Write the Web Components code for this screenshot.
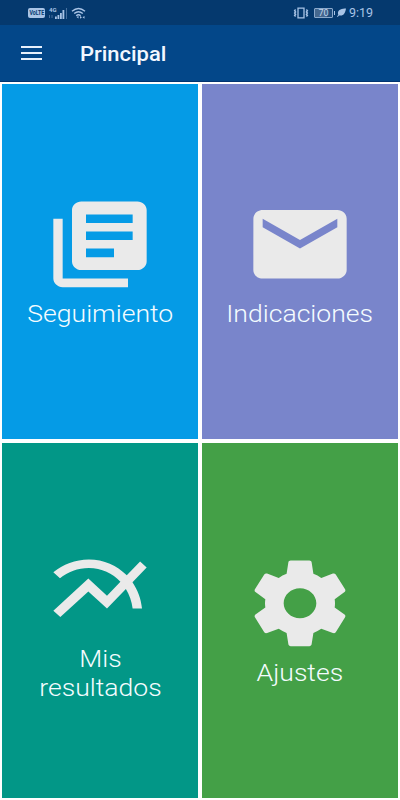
<!DOCTYPE html>
<html lang="es">
<head>
    <meta charset="UTF-8">
    <meta name="viewport" content="width=device-width, initial-scale=1.0">
    <title>Principal</title>
    <style>
        body {
            margin: 0;
            background: #fff;
            font-family: Roboto, "Liberation Sans", sans-serif;
        }
    </style>
</head>
<body>
    <app-screen>
        <status-bar slot="top"></status-bar>
        <app-header slot="top">Principal</app-header>
        <menu-tile icon="library" color="#059be6">Seguimiento</menu-tile>
        <menu-tile icon="mail" color="#7985cb">Indicaciones</menu-tile>
        <menu-tile icon="chart" color="#029787">Mis<br>resultados</menu-tile>
        <menu-tile icon="settings" color="#44a047">Ajustes</menu-tile>
    </app-screen>

    <script>
        const ICONS = {
            library: 'M4 6H2v14c0 1.1.9 2 2 2h14v-2H4V6zm16-4H8c-1.1 0-2 .9-2 2v12c0 1.1.9 2 2 2h12c1.1 0 2-.9 2-2V4c0-1.1-.9-2-2-2zm-1 9H9V9h10v2zm-4 4H9v-2h6v2zm4-8H9V5h10v2z',
            mail: 'M20 4H4c-1.1 0-1.99.9-1.99 2L2 18c0 1.1.9 2 2 2h16c1.1 0 2-.9 2-2V6c0-1.1-.9-2-2-2zm0 4l-8 5-8-5V6l8 5 8-5v2z',
            chart: 'M22 6.92l-1.41-1.41-2.85 3.21C15.68 6.4 12.83 5 9.61 5 6.72 5 4.07 6.16 2 8l1.42 1.42C5.12 7.93 7.27 7 9.61 7c2.74 0 5.09 1.26 6.77 3.24l-2.88 3.24-4-4L2 16.99l1.5 1.5 6-6.01 4 4 4.05-4.55c.75 1.35 1.25 2.9 1.44 4.55H21c-.22-2.3-.95-4.39-2.04-6.14L22 6.92z',
            settings: 'M19.43 12.98c.04-.32.07-.64.07-.98s-.03-.66-.07-.98l2.11-1.65c.19-.15.24-.42.12-.64l-2-3.46c-.12-.22-.39-.3-.61-.22l-2.49 1c-.52-.4-1.08-.73-1.69-.98l-.38-2.65C14.46 2.18 14.25 2 14 2h-4c-.25 0-.46.18-.49.42l-.38 2.65c-.61.25-1.17.59-1.69.98l-2.49-1c-.23-.09-.49 0-.61.22l-2 3.46c-.13.22-.07.49.12.64l2.11 1.65c-.04.32-.07.65-.07.98s.03.66.07.98l-2.11 1.65c-.19.15-.24.42-.12.64l2 3.46c.12.22.39.3.61.22l2.49-1c.52.4 1.08.73 1.69.98l.38 2.65c.03.24.24.42.49.42h4c.25 0 .46-.18.49-.42l.38-2.65c.61-.25 1.17-.59 1.69-.98l2.49 1c.23.09.49 0 .61-.22l2-3.46c.12-.22.07-.49-.12-.64l-2.11-1.65zM12 15.5c-1.93 0-3.5-1.57-3.5-3.5s1.57-3.5 3.5-3.5 3.5 1.57 3.5 3.5-1.57 3.5-3.5 3.5z'
        };

        class AppScreen extends HTMLElement {
            constructor() {
                super();
                this.attachShadow({ mode: 'open' });
                this.shadowRoot.innerHTML = `
                    <style>
                        :host {
                            display: flex;
                            flex-direction: column;
                            height: 800px;
                            overflow: hidden;
                        }
                        main {
                            flex: 1;
                            display: grid;
                            grid-template-columns: 1fr 1fr;
                            grid-template-rows: 355px 355px;
                            gap: 4px;
                            padding: 2px;
                        }
                    </style>
                    <slot name="top"></slot>
                    <main><slot></slot></main>
                `;
            }
        }

        class StatusBar extends HTMLElement {
            constructor() {
                super();
                this.attachShadow({ mode: 'open' });
                this.shadowRoot.innerHTML = `
                    <style>
                        :host {
                            display: flex;
                            align-items: center;
                            height: 25px;
                            padding: 0 25px 0 28px;
                            box-sizing: border-box;
                            background: #05396e;
                            color: #a9c4e6;
                        }
                        svg { display: block; fill: currentColor; }
                        .volte {
                            display: flex;
                            justify-content: center;
                            width: 17px;
                            height: 10px;
                            border-radius: 2px;
                            background: #a9c4e6;
                            color: #05396e;
                            font: 700 7px/10px Roboto, sans-serif;
                        }
                        .volte span { transform: scaleX(0.75); }
                        .signal {
                            display: grid;
                            width: 18px;
                            height: 12px;
                            margin-left: 4px;
                        }
                        .signal > * { grid-area: 1 / 1; }
                        .signal span { font: 700 6px/6px Roboto, sans-serif; }
                        .wifi { margin-left: 4px; }
                        .vibrate { margin-left: auto; }
                        .battery {
                            width: 17px;
                            height: 8px;
                            margin-left: 5px;
                            border: 1px solid #8ba9cc;
                            border-radius: 1px;
                            background: linear-gradient(90deg, #45688f 70%, #1f4d7e 70%);
                            color: #c2d6ee;
                            font: 9px/9px Roboto, sans-serif;
                            text-align: center;
                        }
                        .tip { width: 1px; height: 4px; margin-left: 1px; background: currentColor; }
                        .leaf { margin-left: 2px; }
                        .time { margin-left: 3px; width: 26px; font-size: 12px; line-height: 14px; white-space: nowrap; }
                        .time span { display: inline-block; transform: scaleX(1.04); transform-origin: left; }
                    </style>
                    <div class="volte"><span>VoLTE</span></div>
                    <div class="signal">
                        <span>4G</span>
                        <svg width="18" height="12" viewBox="0 0 18 12">
                            <path d="M6 9.500h1.800V12H6zM8.500 8h1.800v4H8.500zM11 6h1.800v6H11zM13.500 3h1.800v9h-1.800z"/>
                            <path opacity=".4" d="M0 8h1v3H0zM2.500 8h1v3h-1zM17 1h1v11h-1z"/>
                        </svg>
                    </div>
                    <svg class="wifi" width="15" height="12" viewBox="0 0 15 12">
                        <path d="M1 4.200Q7.500-1.400 14 4.200M3.200 6.600Q7.500 2.800 11.800 6.600M5.200 8.700Q7.500 6.900 9.600 8.700" fill="none" stroke="currentColor" stroke-width="1.400"/>
                        <path d="M5.500 10l2-1v2.500zM9 9l2 1.300-2 1.400zM13.500 9l-2 1.300 2 1.400z"/>
                    </svg>
                    <svg class="vibrate" width="16" height="12" viewBox="0 0 16 12">
                        <path d="M5 1.200h6v9.600H5z" fill="none" stroke="currentColor" stroke-width="1.300"/>
                        <path d="M2.600 2.500l-1 1.200 1 1.200-1 1.200 1 1.200-1 1.200 1 1M13.400 2.500l1 1.200-1 1.200 1 1.200-1 1.200 1 1.200-1 1" fill="none" stroke="currentColor" stroke-width="1.400"/>
                    </svg>
                    <div class="battery">70</div>
                    <div class="tip"></div>
                    <svg class="leaf" width="9" height="9" viewBox="0 0 9 9">
                        <path d="M9 .5C5 .5 1.200 1.600.9 5c0 .8.200 1.400.400 1.800L0 8.500l.7.4 1.300-1.500C6.500 8.500 8.300 5 9 .5z"/>
                    </svg>
                    <div class="time"><span>9:19</span></div>
                `;
            }
        }

        class AppHeader extends HTMLElement {
            constructor() {
                super();
                this.attachShadow({ mode: 'open' });
                this.shadowRoot.innerHTML = `
                    <style>
                        :host {
                            display: flex;
                            align-items: center;
                            height: 57px;
                            padding: 0 21px;
                            box-sizing: border-box;
                            border-bottom: 1px solid #02336f;
                            background: #034789;
                            color: #f2f7ff;
                        }
                        .burger {
                            display: flex;
                            flex-direction: column;
                            gap: 4px;
                            width: 21px;
                            margin-right: 38px;
                        }
                        .burger i { height: 2px; background: #e6f0fc; }
                        .title {
                            padding-top: 2px;
                            font-size: 21px;
                            font-weight: 500;
                            line-height: 26px;
                            transform: scaleX(1.045);
                            transform-origin: left;
                        }
                    </style>
                    <div class="burger"><i></i><i></i><i></i></div>
                    <div class="title"><slot></slot></div>
                `;
            }
        }

        class MenuTile extends HTMLElement {
            constructor() {
                super();
                this.attachShadow({ mode: 'open' });
            }

            connectedCallback() {
                this.shadowRoot.innerHTML = `
                    <style>
                        :host {
                            display: flex;
                            flex-direction: column;
                            align-items: center;
                            justify-content: center;
                            background: ${this.getAttribute('color')};
                            color: #f4fcff;
                        }
                        svg {
                            width: 112px;
                            height: 102.700px;
                            fill: #eaeaea;
                        }
                        .label {
                            margin: 3px 0 1.500px;
                            font-size: 24.500px;
                            font-weight: 300;
                            line-height: 29px;
                            text-align: center;
                            transform: scaleX(1.085);
                        }
                    </style>
                    <svg viewBox="0 0 24 24" preserveAspectRatio="none">
                        <path d="${ICONS[this.getAttribute('icon')]}"/>
                    </svg>
                    <div class="label"><slot></slot></div>
                `;
            }
        }

        customElements.define('app-screen', AppScreen);
        customElements.define('status-bar', StatusBar);
        customElements.define('app-header', AppHeader);
        customElements.define('menu-tile', MenuTile);
    </script>
</body>
</html>
